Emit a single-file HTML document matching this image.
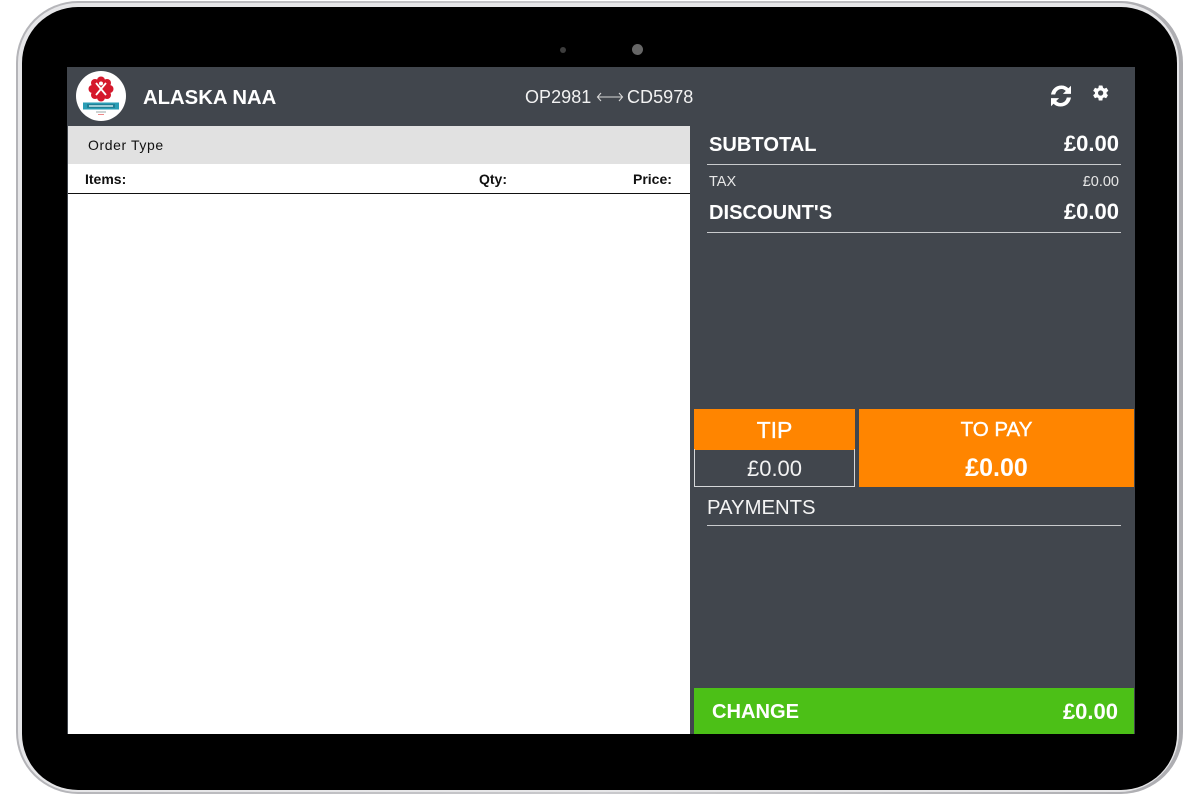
<!DOCTYPE html>
<html><head><meta charset="utf-8"><style>
html,body{margin:0;padding:0;background:#fff}
body{width:1201px;height:800px;position:relative;overflow:hidden;font-family:"Liberation Sans",sans-serif;color:#fff}
div{position:absolute;box-sizing:border-box;white-space:nowrap}
.b{font-weight:bold}
.r{text-align:right}
.c{text-align:center}
.line{background:#c9cbcd;height:1px}
</style></head><body>
<div style="left:16px;top:1px;width:1167px;height:793px;border-radius:62px;background:linear-gradient(90deg,#b4b4b8,#c9c9cc 50%,#adadb1)"></div>
<div style="left:18px;top:3px;width:1161px;height:789px;border-radius:60px;background:#e6e6e8"></div>
<div style="left:22px;top:7px;width:1155px;height:783px;border-radius:56px;background:#000"></div>
<div style="left:560px;top:47px;width:6px;height:6px;border-radius:50%;background:#3d3d3d"></div>
<div style="left:632px;top:44px;width:11px;height:11px;border-radius:50%;background:#666"></div>

<div style="left:67px;top:67px;width:1068px;height:667px;background:#41464d"></div>
<div style="left:68px;top:126px;width:622px;height:608px;background:#fff"></div>
<div style="left:68px;top:126px;width:622px;height:38px;background:#e1e1e1"></div>
<div style="left:68px;top:193px;width:622px;height:1px;background:#111"></div>

<div style="left:76px;top:71px;width:50px;height:50px;border-radius:50%;background:#fff"></div>
<svg style="position:absolute;left:76px;top:71px" width="50" height="50" viewBox="0 0 50 50">
<g fill="#d5182c"><circle cx="25" cy="18" r="9.500"/><circle cx="25" cy="9.500" r="4"/><circle cx="25" cy="26.500" r="4"/><circle cx="16.500" cy="18" r="4"/><circle cx="33.500" cy="18" r="4"/><circle cx="19" cy="12" r="4"/><circle cx="31" cy="12" r="4"/><circle cx="19" cy="24" r="4"/><circle cx="31" cy="24" r="4"/></g>
<path d="M20 12 30 24M30 12 20 24" stroke="#fff" stroke-width="1.800"/>
<circle cx="25" cy="12.500" r="2" fill="#fff"/>
<rect x="7" y="31.500" width="36" height="7" fill="#2a9db5"/>
<rect x="11" y="33" width="28" height="4" fill="#1f7f95"/>
<rect x="13" y="34.300" width="24" height="1.400" fill="#d6eef2"/>
<rect x="20" y="40.500" width="10" height="1" fill="#9aa"/>
<rect x="22" y="43" width="6" height="1" fill="#e88"/>
</svg>

<div class="b" style="left:143px;top:86px;font-size:20.300px;line-height:24px">ALASKA NAA</div>
<div style="left:525px;top:86.500px;font-size:18px;line-height:21px;color:#f2f2f2;letter-spacing:.05px">OP2981</div>
<svg style="position:absolute;left:596px;top:90px" width="28" height="14" viewBox="0 0 28 14"><path d="M5 3 1.500 7 5 11M1.500 7H26.500M23 3l3.500 4-3.500 4" fill="none" stroke="#d8d8d8" stroke-width="1.100"/></svg>
<div style="left:627px;top:86.500px;font-size:18px;line-height:21px;color:#f2f2f2;letter-spacing:.05px">CD5978</div>

<svg style="position:absolute;left:1049px;top:84px" width="24" height="24" viewBox="0 0 24 24" fill="#fff">
<path d="M2 10.500C3 5 7 1.500 12.500 1.500c2.800 0 5.100 1 6.900 2.800L22 1.800V9.900h-8.100l2.900-2.900C15.800 5.900 14.300 5 12.500 5 9.500 5 7 7 6.200 10.500Z"/>
<path d="M22 13.500c-1 5.500-5 9-10.500 9-2.800 0-5.100-1-6.900-2.800L2 22.200V14.100h8.100L7.200 17c1 1.100 2.500 2 4.300 2 3 0 5.500-2 6.300-5.500Z"/>
</svg>
<svg style="position:absolute;left:1092px;top:84px" width="18" height="18" viewBox="0 0 24 24" fill="#fff">
<path fill-rule="evenodd" d="M19.400 13c0-.3.100-.7.100-1s0-.7-.1-1l2.100-1.600c.2-.2.300-.4.100-.7l-2-3.400c-.1-.2-.4-.3-.6-.2l-2.500 1c-.5-.4-1.100-.7-1.700-1L14 2.400c0-.2-.2-.4-.5-.4h-4c-.2 0-.4.200-.5.400l-.4 2.700c-.6.200-1.200.6-1.700 1l-2.500-1c-.2-.1-.5 0-.6.200l-2 3.400c-.1.300-.1.500.1.700L4 11c0 .3-.1.700-.1 1s0 .7.1 1l-2.200 1.600c-.2.200-.2.400-.1.700l2 3.400c.1.200.4.300.6.200l2.500-1c.5.400 1.100.7 1.700 1l.4 2.700c.1.200.3.400.5.400h4c.3 0 .5-.2.500-.4l.4-2.700c.6-.3 1.200-.6 1.700-1l2.500 1c.2.100.5 0 .6-.2l2-3.400c.2-.3.100-.5-.1-.7ZM11.500 15.500a3.500 3.500 0 1 1 0-7 3.500 3.500 0 0 1 0 7Z"/>
</svg>

<div style="left:88px;top:137px;font-size:14px;line-height:17px;color:#111;letter-spacing:.6px">Order Type</div>
<div class="b" style="left:85px;top:171px;font-size:14px;line-height:17px;color:#111">Items:</div>
<div class="b" style="left:479px;top:171px;font-size:14px;line-height:17px;color:#111">Qty:</div>
<div class="b" style="left:633px;top:171px;font-size:14px;line-height:17px;color:#111">Price:</div>

<div class="b" style="left:709px;top:132px;font-size:20.100px;line-height:26px">SUBTOTAL</div>
<div class="b r" style="left:1019px;width:100px;top:131px;font-size:22px;line-height:26px">£0.00</div>
<div class="line" style="left:707px;top:164px;width:414px"></div>
<div style="left:709px;top:174px;font-size:14.500px;line-height:17px;color:#e8e8e8">TAX</div>
<div class="r" style="left:1019px;width:100px;top:174px;font-size:14.500px;line-height:17px;color:#e8e8e8">£0.00</div>
<div class="b" style="left:709px;top:200px;font-size:20.100px;line-height:26px">DISCOUNT'S</div>
<div class="b r" style="left:1019px;width:100px;top:199px;font-size:22px;line-height:26px">£0.00</div>
<div class="line" style="left:707px;top:232px;width:414px"></div>

<div class="c" style="left:694px;top:409px;width:161px;height:41px;background:#ff8500;font-size:23px;line-height:43px;-webkit-text-stroke:.3px #fff">TIP</div>
<div class="c" style="left:694px;top:449px;width:161px;height:38px;border:1.500px solid #d5d7d9;border-top:0;font-size:22px;line-height:40px;color:#f2f2f2">£0.00</div>
<div style="left:859px;top:409px;width:275px;height:78px;background:#ff8500"></div>
<div class="c" style="left:859px;top:417px;width:275px;font-size:20.500px;line-height:26px;-webkit-text-stroke:.4px #fff">TO PAY</div>
<div class="b c" style="left:859px;top:454px;width:275px;font-size:25px;line-height:29px">£0.00</div>

<div style="left:707px;top:495px;font-size:20.300px;line-height:26px;color:#f4f4f4">PAYMENTS</div>
<div class="line" style="left:707px;top:525px;width:414px"></div>

<div style="left:694px;top:688px;width:440px;height:46px;background:#4cc017"></div>
<div class="b" style="left:712px;top:699px;font-size:20.100px;line-height:26px">CHANGE</div>
<div class="b r" style="left:1018px;width:100px;top:699px;font-size:22px;line-height:26px">£0.00</div>
</body></html>
